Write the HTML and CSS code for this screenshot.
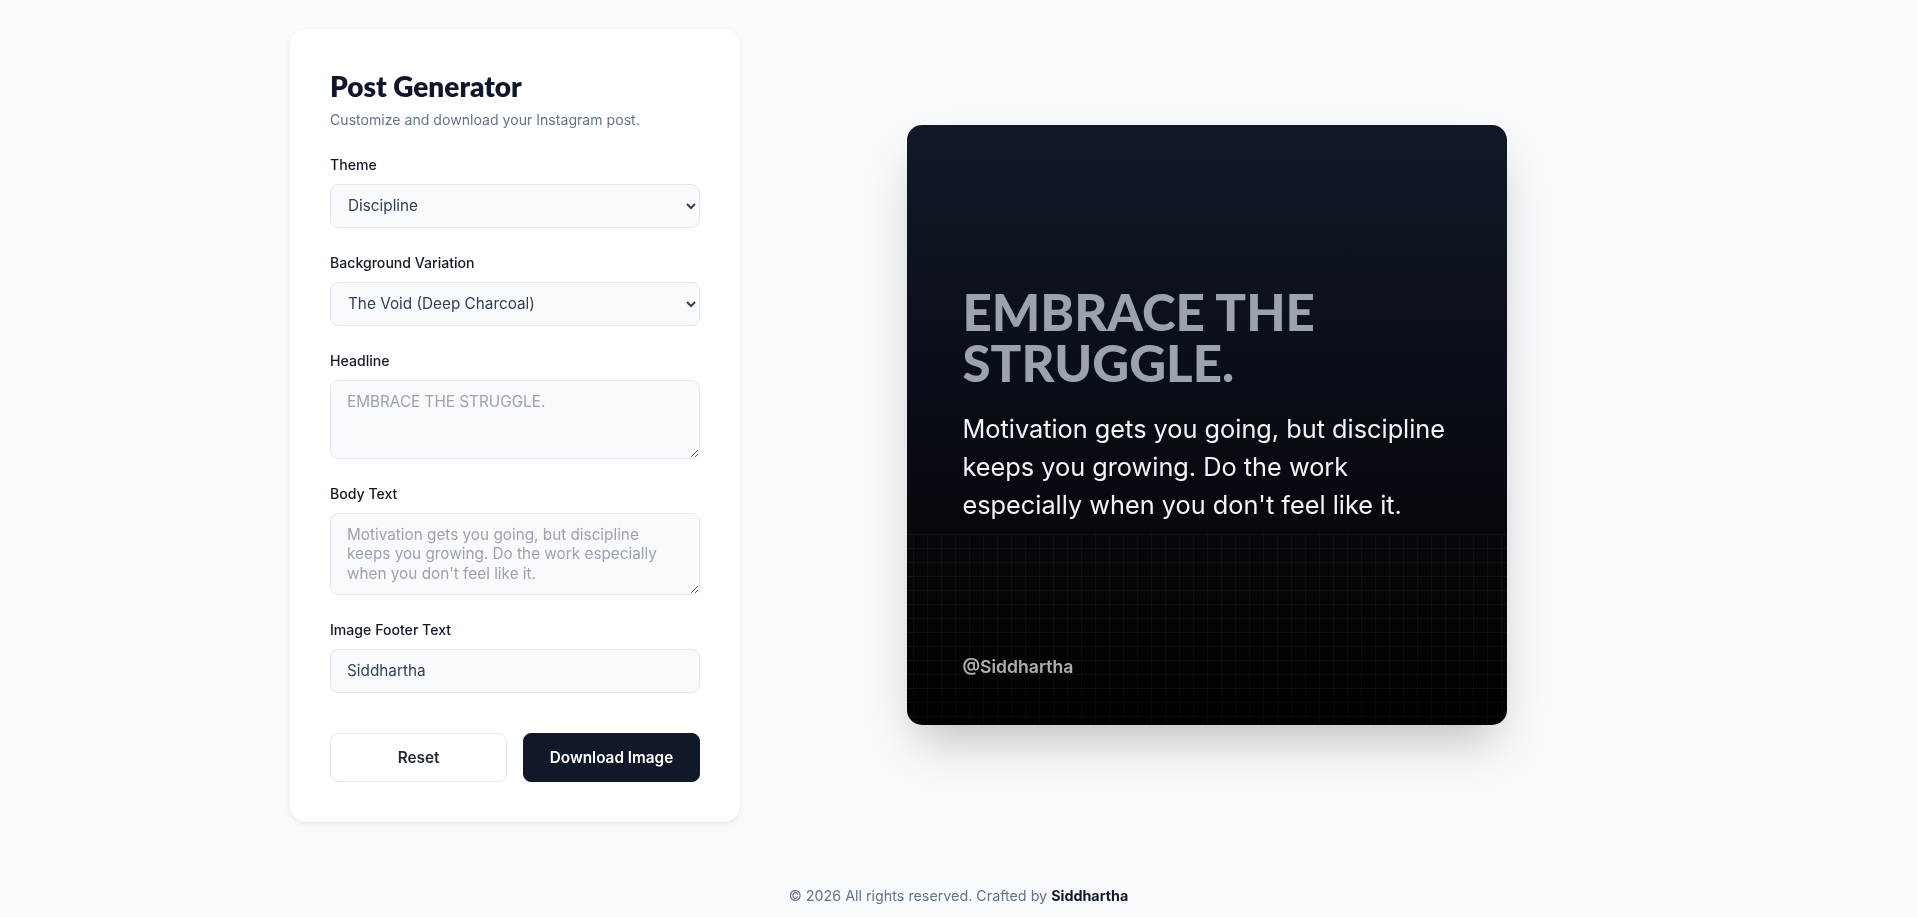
FILE: index.html
```html
<!DOCTYPE html>
<html lang="en">
<head>
<meta charset="utf-8">
<title>Post Generator</title>
<link rel="stylesheet" href="styles.css">
</head>
<body>
<div class="page">
  <main class="layout">
    <section class="panel">
      <h1 class="panel-title">Post Generator</h1>
      <p class="panel-sub">Customize and download your Instagram post.</p>

      <div class="field">
        <label class="field-label">Theme</label>
        <select class="control control-select">
          <option>Discipline</option>
        </select>
      </div>

      <div class="field">
        <label class="field-label">Background Variation</label>
        <select class="control control-select">
          <option>The Void (Deep Charcoal)</option>
        </select>
      </div>

      <div class="field">
        <label class="field-label">Headline</label>
        <textarea class="control control-area area-headline" placeholder="EMBRACE THE STRUGGLE."></textarea>
      </div>

      <div class="field">
        <label class="field-label">Body Text</label>
        <textarea class="control control-area area-body" placeholder="Motivation gets you going, but discipline keeps you growing. Do the work especially when you don't feel like it."></textarea>
      </div>

      <div class="field">
        <label class="field-label">Image Footer Text</label>
        <input class="control" type="text" value="Siddhartha">
      </div>

      <div class="actions">
        <button class="btn btn-reset" type="button">Reset</button>
        <button class="btn btn-primary" type="button">Download Image</button>
      </div>
    </section>

    <div class="stage">
      <div class="post">
        <div class="post-grid"></div>
        <div class="post-main">
          <h2 class="post-headline">EMBRACE THE STRUGGLE.</h2>
          <p class="post-body">Motivation gets you going, but discipline keeps you growing. Do the work especially when you don't feel like it.</p>
        </div>
        <div class="post-footer">@Siddhartha</div>
      </div>
    </div>
  </main>

  <footer class="site-footer">© 2026 All rights reserved. Crafted by <strong>Siddhartha</strong></footer>
</div>
</body>
</html>
```

FILE: styles.css
```css
* {
  box-sizing: border-box;
}

html, body {
  margin: 0;
  padding: 0;
}

body {
  background: #f8fafc;
  font-family: Inter, "Noto Sans", sans-serif;
  color: #111827;
}

.page {
  min-height: 100vh;
}

.layout {
  width: 1337px;
  margin: 0 auto;
  padding-top: 29px;
  display: flex;
  align-items: center;
  gap: 46px;
}

/* ---------- Form panel ---------- */

.panel {
  width: 450px;
  flex: none;
  background: #ffffff;
  border-radius: 16px;
  padding: 40px;
  box-shadow: 0 2px 6px rgba(15, 23, 42, 0.06), 0 1px 2px rgba(15, 23, 42, 0.04);
}

.panel-title {
  margin: 0;
  font-family: Lato, "Noto Sans", sans-serif;
  font-weight: 800;
  font-size: 28px;
  line-height: 34px;
  color: #0f172a;
}

.panel-sub {
  margin: 7.4px 0 0;
  font-size: 14.1px;
  line-height: 20px;
  color: #64748b;
}

.field {
  margin-top: 25.8px;
}

.field + .field {
  margin-top: 26.5px;
}

.field-label {
  display: block;
  font-size: 14.1px;
  line-height: 18px;
  font-weight: 500;
  color: #111827;
  margin-bottom: 9.5px;
}

.control {
  display: block;
  width: 100%;
  height: 44px;
  padding: 0 16px;
  font-family: Inter, "Noto Sans", sans-serif;
  font-size: 15.3px;
  color: #334155;
  background-color: #f8fafc;
  border: 1px solid #e2e8f0;
  border-radius: 8px;
  outline: none;
}

.control-select {
  padding-left: 13px;
  padding-right: 8px;
}

.control-area {
  padding: 11px 16px;
  line-height: 19.6px;
  resize: vertical;
}

.control-area::placeholder {
  color: #9ca3af;
}

.area-headline {
  height: 79px;
}

.area-body {
  height: 82px;
}

.actions {
  display: flex;
  gap: 16px;
  margin-top: 40px;
}

.btn {
  flex: 1;
  height: 49px;
  border-radius: 8px;
  font-family: Inter, "Noto Sans", sans-serif;
  font-size: 15.3px;
  font-weight: 600;
  cursor: pointer;
}

.btn-reset {
  background: #ffffff;
  color: #1f2937;
  border: 1px solid #e2e8f0;
}

.btn-primary {
  background: #111827;
  color: #ffffff;
  border: 1px solid #111827;
}

/* ---------- Preview ---------- */

.stage {
  flex: 1;
  display: flex;
  justify-content: center;
}

.post {
  position: relative;
  width: 600px;
  height: 600px;
  border-radius: 15px;
  overflow: hidden;
  padding: 56px 56px 46px;
  display: flex;
  flex-direction: column;
  background: linear-gradient(180deg, #111827 0%, #000000 100%);
  box-shadow: 0 25px 50px -12px rgba(0, 0, 0, 0.25);
}

.post-grid {
  position: absolute;
  left: 0;
  right: 0;
  bottom: 0;
  height: 191px;
  background-image:
    linear-gradient(rgba(255, 255, 255, 0.045) 1px, transparent 1px),
    linear-gradient(90deg, rgba(255, 255, 255, 0.035) 1px, transparent 1px);
  background-size: 14px 14px;
  background-position: 6px 0;
}

.post-main {
  position: relative;
  flex: 1;
  display: flex;
  flex-direction: column;
  justify-content: center;
  padding-bottom: 27px;
}

.post-headline {
  margin: 0;
  font-family: Lato, "Noto Sans", sans-serif;
  font-weight: 900;
  font-size: 51px;
  line-height: 51.4px;
  color: #9ca3af;
}

.post-body {
  margin: 21px 0 0;
  font-size: 25.3px;
  line-height: 37.9px;
  color: #f3f4f6;
}

.post-footer {
  position: relative;
  font-size: 17.6px;
  line-height: 24px;
  font-weight: 600;
  color: rgba(255, 255, 255, 0.68);
}

/* ---------- Footer ---------- */

.site-footer {
  margin-top: 64px;
  text-align: center;
  font-size: 14.3px;
  line-height: 20px;
  color: #64748b;
}

.site-footer strong {
  color: #111827;
  font-weight: 700;
}
```
